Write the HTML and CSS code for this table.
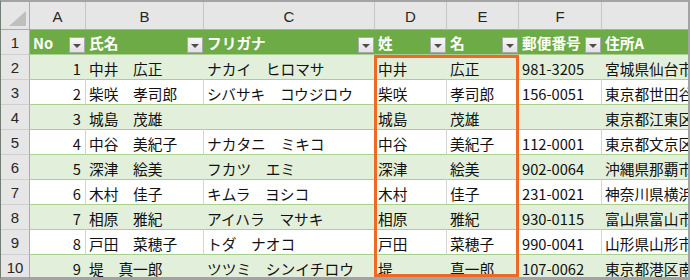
FILE: index.html
```html
<!DOCTYPE html>
<html lang="ja">
<head>
<meta charset="utf-8">
<link rel="stylesheet" href="styles.css">
</head>
<body>
<div class="sheet">
  <div class="row colhdr">
    <div class="corner"><svg width="28" height="27" viewBox="0 0 28 27"><polygon points="25,9 25,24 8,24" fill="#bfbfbf"/></svg></div>
    <div class="ch">A</div><div class="ch">B</div><div class="ch">C</div><div class="ch">D</div><div class="ch">E</div><div class="ch">F</div><div class="ch">G</div>
  </div>
  <div class="row thead">
    <div class="rh">1</div>
    <div class="th"><span>No</span><i class="fb"></i></div>
    <div class="th"><span>氏名</span><i class="fb"></i></div>
    <div class="th"><span>フリガナ</span><i class="fb"></i></div>
    <div class="th"><span>姓</span><i class="fb"></i></div>
    <div class="th"><span>名</span><i class="fb"></i></div>
    <div class="th"><span>郵便番号</span><i class="fb"></i></div>
    <div class="th"><span>住所A</span></div>
  </div>
  <div class="row band">
    <div class="rh">2</div><div class="td num">1</div><div class="td">中井　広正</div><div class="td">ナカイ　ヒロマサ</div><div class="td">中井</div><div class="td">広正</div><div class="td">981-3205</div><div class="td">宮城県仙台市泉区</div>
  </div>
  <div class="row plain">
    <div class="rh">3</div><div class="td num">2</div><div class="td">柴咲　孝司郎</div><div class="td">シバサキ　コウジロウ</div><div class="td">柴咲</div><div class="td">孝司郎</div><div class="td">156-0051</div><div class="td">東京都世田谷区</div>
  </div>
  <div class="row band">
    <div class="rh">4</div><div class="td num">3</div><div class="td">城島　茂雄</div><div class="td"></div><div class="td">城島</div><div class="td">茂雄</div><div class="td"></div><div class="td">東京都江東区</div>
  </div>
  <div class="row plain">
    <div class="rh">5</div><div class="td num">4</div><div class="td">中谷　美紀子</div><div class="td">ナカタニ　ミキコ</div><div class="td">中谷</div><div class="td">美紀子</div><div class="td">112-0001</div><div class="td">東京都文京区</div>
  </div>
  <div class="row band">
    <div class="rh">6</div><div class="td num">5</div><div class="td">深津　絵美</div><div class="td">フカツ　エミ</div><div class="td">深津</div><div class="td">絵美</div><div class="td">902-0064</div><div class="td">沖縄県那覇市</div>
  </div>
  <div class="row plain">
    <div class="rh">7</div><div class="td num">6</div><div class="td">木村　佳子</div><div class="td">キムラ　ヨシコ</div><div class="td">木村</div><div class="td">佳子</div><div class="td">231-0021</div><div class="td">神奈川県横浜市</div>
  </div>
  <div class="row band">
    <div class="rh">8</div><div class="td num">7</div><div class="td">相原　雅紀</div><div class="td">アイハラ　マサキ</div><div class="td">相原</div><div class="td">雅紀</div><div class="td">930-0115</div><div class="td">富山県富山市</div>
  </div>
  <div class="row plain">
    <div class="rh">9</div><div class="td num">8</div><div class="td">戸田　菜穂子</div><div class="td">トダ　ナオコ</div><div class="td">戸田</div><div class="td">菜穂子</div><div class="td">990-0041</div><div class="td">山形県山形市</div>
  </div>
  <div class="row band">
    <div class="rh">10</div><div class="td num">9</div><div class="td">堤　真一郎</div><div class="td">ツツミ　シンイチロウ</div><div class="td">堤</div><div class="td">真一郎</div><div class="td">107-0062</div><div class="td">東京都港区南青山</div>
  </div>
  <div class="selection"></div>
</div>
</body>
</html>
```

FILE: styles.css
```css
html, body {
  margin: 0;
  padding: 0;
  background: #ffffff;
  overflow: hidden;
}

.sheet {
  position: relative;
  width: 690px;
  height: 280px;
  box-sizing: border-box;
  border-top: 2px solid #a3a3a3;
  border-right: 2px solid #a3a3a3;
  border-bottom: 3px solid #a3a3a3;
  border-left: 1px solid #6f7f6f;
  overflow: hidden;
  font-family: "Noto Sans CJK JP", "Noto Sans", sans-serif;
  font-size: 14.7px;
  color: #111;
}

.row {
  display: grid;
  grid-template-columns: 29px 56px 118px 171px 72px 72px 83px 240px;
  height: 25px;
}

.colhdr {
  height: 28px;
  background: #e6e6e6;
}

.corner {
  border-right: 1px solid #ababab;
  border-bottom: 1px solid #ababab;
  box-sizing: border-box;
}

.corner svg {
  display: block;
}

.ch {
  box-sizing: border-box;
  border-right: 1px solid #c6c6c6;
  border-bottom: 1px solid #ababab;
  display: flex;
  align-items: center;
  justify-content: center;
  padding-top: 2px;
  font-family: "Liberation Sans", Arial, sans-serif;
  font-size: 15px;
  color: #262626;
}

.rh {
  box-sizing: border-box;
  background: #e6e6e6;
  border-right: 1px solid #ababab;
  border-bottom: 1px solid #cfcfcf;
  display: flex;
  align-items: center;
  justify-content: center;
  padding-top: 1px;
  font-family: "Liberation Sans", Arial, sans-serif;
  font-size: 15px;
  color: #262626;
}

.thead .th {
  box-sizing: border-box;
  background: #6cab45;
  color: #ffffff;
  font-weight: bold;
  display: flex;
  align-items: center;
  justify-content: space-between;
  padding-left: 3px;
  border-bottom: 1px solid #a9d08e;
  white-space: nowrap;
  overflow: hidden;
}

.th span {
  padding-top: 1px;
}

.fb {
  flex: none;
  width: 16px;
  height: 16px;
  box-sizing: border-box;
  margin-right: 1px;
  margin-top: 5px;
  border: 1px solid #a9a9a9;
  background: linear-gradient(#f7f7f7, #e2e2e2);
  display: flex;
  align-items: center;
  justify-content: center;
}

.fb::after {
  content: "";
  display: block;
  width: 0;
  height: 0;
  margin-top: 2px;
  border-left: 4px solid transparent;
  border-right: 4px solid transparent;
  border-top: 4px solid #4d4d4d;
}

.td {
  box-sizing: border-box;
  display: flex;
  align-items: center;
  padding: 2px 3px 0 3px;
  white-space: nowrap;
  overflow: hidden;
  border-bottom: 1px solid #a9d08e;
}

.band .td {
  background: #e2efda;
  border-right: 1px solid #e2efda;
}

.plain .td {
  background: #ffffff;
  border-right: 1px solid #d4d4d4;
}

.td.num {
  justify-content: flex-end;
  padding-right: 4px;
}

.selection {
  position: absolute;
  left: 373px;
  top: 53px;
  width: 145px;
  bottom: 0;
  box-sizing: border-box;
  border: 3px solid #ee6a24;
  pointer-events: none;
}
```
